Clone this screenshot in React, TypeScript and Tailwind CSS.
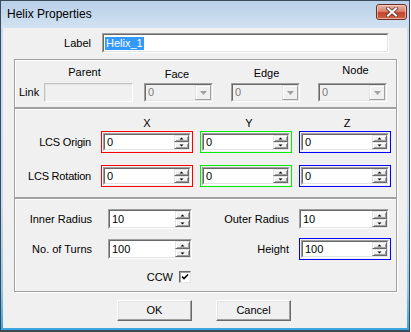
import React from "react";

function Sunken({ className = "", inner = "bg-white", children }: { className?: string; inner?: string; children?: React.ReactNode }) {
  return (
    <div className={`border border-t-[#a0a0a0] border-l-[#a0a0a0] border-r-white border-b-white ${className}`}>
      <div className={`h-full w-full border border-t-[#696969] border-l-[#696969] border-r-[#e3e3e3] border-b-[#e3e3e3] flex ${inner}`}>
        {children}
      </div>
    </div>
  );
}

function SpinBtn({ up }: { up: boolean }) {
  return (
    <div className="flex-1 flex items-center justify-center bg-[#f0f0f0] border border-t-[#e3e3e3] border-l-[#e3e3e3] border-r-[#696969] border-b-[#696969] shadow-[inset_1px_1px_0_#ffffff,inset_-1px_-1px_0_#a0a0a0]">
      <svg width="5" height="3" viewBox="0 0 5 3">
        {up ? <path d="M2.5 0.5L4.5 2.5H0.5z" fill="#000" /> : <path d="M0.5 0.5H4.5L2.5 2.5z" fill="#000" />}
      </svg>
    </div>
  );
}

function Spin({ value, w, color }: { value: string; w: string; color?: string }) {
  const content = (
    <>
      <div className="flex-1 pl-[2px] flex items-center text-black">{value}</div>
      <div className="w-[15px] h-full flex flex-col">
        <SpinBtn up />
        <SpinBtn up={false} />
      </div>
    </>
  );
  if (!color) return <Sunken className={`${w} h-[20px]`}>{content}</Sunken>;
  return (
    <div className={`${w} h-[22px] border ${color} p-[1px]`}>
      <Sunken className="w-full h-full">{content}</Sunken>
    </div>
  );
}

function Combo() {
  return (
    <Sunken className="w-[69px] h-[19px]" inner="bg-[#f0f0f0]">
      <div className="flex-1 pl-[2px] flex items-center text-[#7d7d7d]">0</div>
      <div className="w-[16px] h-full flex items-center justify-center bg-[#f0f0f0] border border-t-[#e3e3e3] border-l-[#e3e3e3] border-r-[#a0a0a0] border-b-[#a0a0a0] shadow-[inset_1px_1px_0_#ffffff]">
        <svg width="7" height="4" viewBox="0 0 7 4">
          <path d="M0 0H7L3.5 4z" fill="#a0a0a0" />
        </svg>
      </div>
    </Sunken>
  );
}

function Button({ label, className = "" }: { label: string; className?: string }) {
  return (
    <div className={`w-[75px] h-[21px] flex items-center justify-center bg-[#f0f0f0] border border-t-white border-l-white border-r-[#696969] border-b-[#696969] shadow-[inset_-1px_-1px_0_#a0a0a0,inset_1px_1px_0_#e3e3e3] text-black ${className}`}>
      {label}
    </div>
  );
}

const groupCls = "ml-[11px] w-[383px] border border-[#a0a0a0] shadow-[inset_1px_1px_0_#ffffff,1px_1px_0_#ffffff]";

export default function App() {
  return (
    <div className="w-[411px] h-[332px] bg-white font-['Liberation_Sans',Arial,sans-serif]">
      <div className="w-[410px] h-[332px] border border-b-2 border-[#3b4a5a] flex flex-col px-[2px] pb-[2px] bg-[linear-gradient(180deg,#bad1e9_0%,#cadcf0_10%,#c8dcf0_60%,#8cc6ea_88%,#3aa5de_100%)]">
        {/* Title bar */}
        <div className="h-[27px] flex items-start justify-between bg-[linear-gradient(180deg,#b9d0e8,#d2e2f2)] -mx-[2px] px-[2px]">
          <div className="mt-[6px] ml-[4px] text-[12px] leading-[15px] text-black">Helix Properties</div>
          <div className="mt-[3px] w-[31px] h-[16px] rounded-[3px] border border-[#6e2d24] bg-[linear-gradient(180deg,#eab3a6_0%,#d9836f_45%,#c4432b_55%,#d0654a_100%)] shadow-[inset_0_0_0_1px_rgba(255,220,210,0.6)] flex items-center justify-center">
            <svg width="12" height="10" viewBox="0 0 12 10">
              <path d="M2 1.5L10 8.5M10 1.5L2 8.5" stroke="#5b302a" strokeWidth="3.6" strokeLinecap="square" />
              <path d="M2 1.5L10 8.5M10 1.5L2 8.5" stroke="#ffffff" strokeWidth="2" strokeLinecap="square" />
            </svg>
          </div>
        </div>

        {/* Content */}
        <div className="h-[300px] bg-[#f0f0f0] flex flex-col text-[11px] leading-[13px] text-black">
          {/* Label row */}
          <div className="mt-[5px] h-[20px] flex items-center">
            <div className="w-[88px] text-right">Label</div>
            <Sunken className="ml-[11px] w-[287px] h-[20px]">
              <div className="flex items-center pl-[1px]">
                <span className="h-[13px] flex items-center bg-[#3399ff] text-white px-[1px]">Helix_1</span>
              </div>
            </Sunken>
          </div>

          {/* Group 1: Link */}
          <div className={`mt-[6px] h-[49px] ${groupCls} flex items-start`}>
            <div className="w-[29px] h-full flex flex-col">
              <div className="h-[23px]" />
              <div className="h-[19px] pl-[4px] flex items-center">Link</div>
            </div>
            <div className="w-[89px] flex flex-col">
              <div className="h-[23px] pt-[6px] pr-[8px] text-center">Parent</div>
              <div className="h-[19px] border border-t-[#c2c2c2] border-l-[#c2c2c2] border-r-[#ffffff] border-b-[#ffffff] shadow-[inset_1px_1px_0_#e3e3e3] bg-[#f0f0f0]" />
            </div>
            <div className="ml-[11px] w-[69px] flex flex-col">
              <div className="h-[23px] pt-[8px] pr-[3px] text-center">Face</div>
              <Combo />
            </div>
            <div className="ml-[18px] w-[69px] flex flex-col">
              <div className="h-[23px] pt-[7px] pl-[2px] text-center">Edge</div>
              <Combo />
            </div>
            <div className="ml-[18px] w-[69px] flex flex-col">
              <div className="h-[23px] pt-[4px] pl-[6px] text-center">Node</div>
              <Combo />
            </div>
          </div>

          {/* Group 2: LCS */}
          <div className={`h-[90px] ${groupCls} flex flex-col`}>
            <div className="h-[22px] flex">
              <div className="w-[86px]" />
              <div className="w-[92px] pt-[8px] text-center">X</div>
              <div className="ml-[7px] w-[92px] pt-[8px] pl-[6px] text-center">Y</div>
              <div className="ml-[7px] w-[92px] pt-[8px] pl-[4px] text-center">Z</div>
            </div>
            <div className="h-[22px] flex items-center">
              <div className="w-[76px] text-right tracking-[-0.2px]">LCS Origin</div>
              <div className="ml-[10px]"><Spin value="0" w="w-[92px]" color="border-[#ff0000]" /></div>
              <div className="ml-[7px]"><Spin value="0" w="w-[92px]" color="border-[#00ee00]" /></div>
              <div className="ml-[7px]"><Spin value="0" w="w-[92px]" color="border-[#0000ff]" /></div>
            </div>
            <div className="mt-[12px] h-[22px] flex items-center">
              <div className="w-[76px] text-right tracking-[-0.2px]">LCS Rotation</div>
              <div className="ml-[10px]"><Spin value="0" w="w-[92px]" color="border-[#ff0000]" /></div>
              <div className="ml-[7px]"><Spin value="0" w="w-[92px]" color="border-[#00ee00]" /></div>
              <div className="ml-[7px]"><Spin value="0" w="w-[92px]" color="border-[#0000ff]" /></div>
            </div>
          </div>

          {/* Group 3 */}
          <div className={`h-[94px] ${groupCls} flex flex-col`}>
            <div className="mt-[10px] h-[20px] flex items-center">
              <div className="w-[77px] text-right">Inner Radius</div>
              <div className="ml-[16px]"><Spin value="10" w="w-[84px]" /></div>
              <div className="w-[97px] text-right">Outer Radius</div>
              <div className="ml-[10px]"><Spin value="10" w="w-[90px]" /></div>
            </div>
            <div className="mt-[9px] h-[22px] flex items-center">
              <div className="w-[77px] text-right">No. of Turns</div>
              <div className="ml-[16px]"><Spin value="100" w="w-[84px]" /></div>
              <div className="w-[97px] text-right">Height</div>
              <div className="ml-[10px]"><Spin value="100" w="w-[92px]" color="border-[#0000ff]" /></div>
            </div>
            <div className="mt-[11px] h-[12px] flex items-center">
              <div className="w-[158px] text-right">CCW</div>
              <div className="ml-[6px] w-[12px] h-[12px] border border-t-[#696969] border-l-[#696969] border-r-[#e3e3e3] border-b-[#e3e3e3] shadow-[inset_1px_1px_0_#a0a0a0] bg-white flex items-center justify-center">
                <svg width="8" height="8" viewBox="0 0 8 8">
                  <path d="M1 3.5L3 5.5L7 1.5" stroke="#000" strokeWidth="1.6" fill="none" />
                </svg>
              </div>
            </div>
          </div>

          {/* Buttons */}
          <div className="mt-[8px] h-[21px] flex">
            <Button label="OK" className="ml-[114px]" />
            <Button label="Cancel" className="ml-[24px]" />
          </div>
        </div>
      </div>
    </div>
  );
}
